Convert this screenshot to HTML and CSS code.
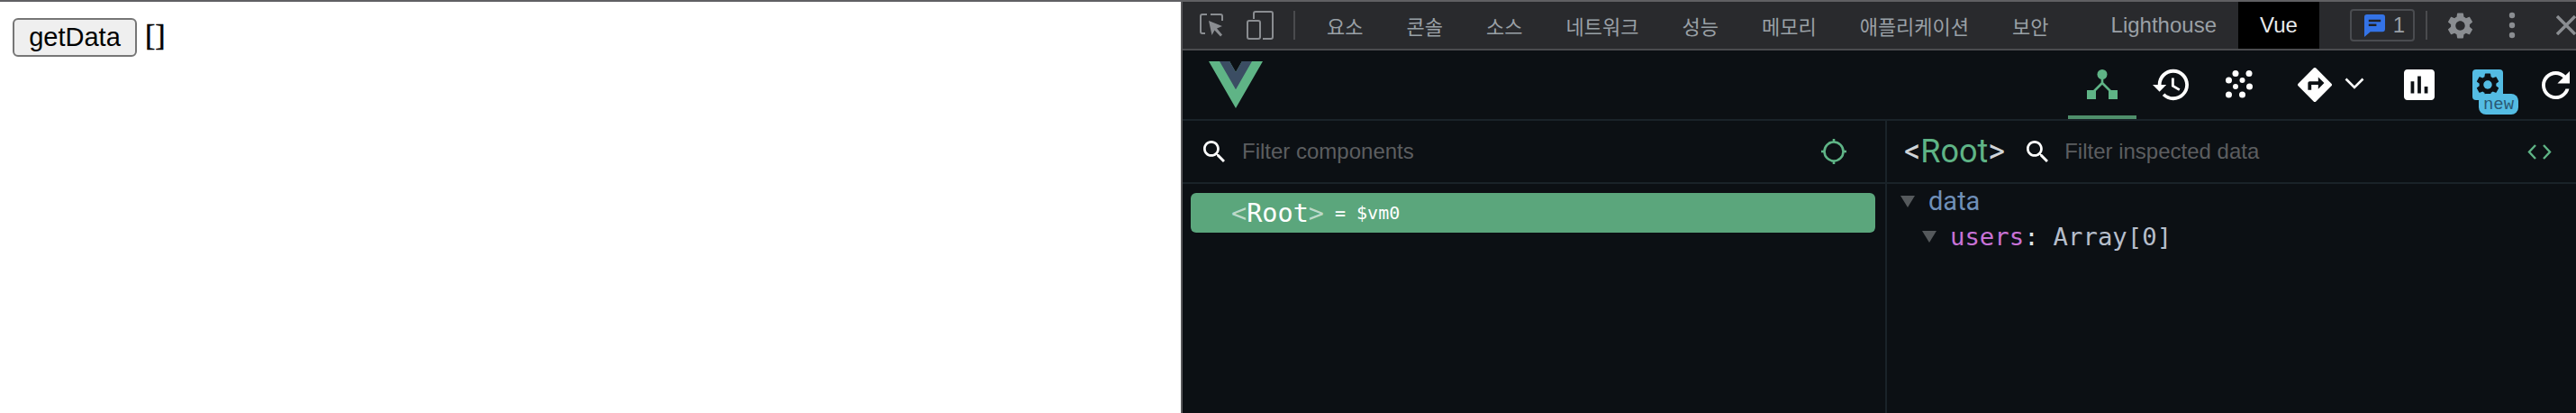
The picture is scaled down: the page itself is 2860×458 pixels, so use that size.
FILE: index.html
```html
<!DOCTYPE html>
<html lang="ko">
<head>
<meta charset="utf-8">
<title>getData</title>
<link rel="stylesheet" href="styles.css">
</head>
<body>
<div class="window">
  <main class="page">
    <button class="get-btn" type="button">getData</button>
    <span class="result">[]</span>
  </main>
  <section class="devtools">
    <header class="tabbar">
      <svg class="ic-inspect" viewBox="0 0 26 26" width="26" height="26"><path d="M8 1H3a2 2 0 0 0-2 2v17a2 2 0 0 0 2 2h3M12 1h11a2 2 0 0 1 2 2v5" fill="none" stroke="#8a8d91" stroke-width="2"/><path d="M10 8l15 6-6 2.500 6 7-2 2-6.500-7-3 5.500z" fill="#8a8d91"/></svg>
      <svg class="ic-device" viewBox="0 0 30 32" width="30" height="32"><path d="M8 9V3a2 2 0 0 1 2-2h17a2 2 0 0 1 2 2v26a2 2 0 0 1-2 2h-9" fill="none" stroke="#8a8d91" stroke-width="2"/><rect x="1" y="11" width="14" height="20" rx="2" fill="none" stroke="#8a8d91" stroke-width="2"/></svg>
      <span class="vsep"></span>
      <nav class="tabs">
        <span class="tab ko">요소</span>
        <span class="tab ko">콘솔</span>
        <span class="tab ko">소스</span>
        <span class="tab ko">네트워크</span>
        <span class="tab ko">성능</span>
        <span class="tab ko">메모리</span>
        <span class="tab ko">애플리케이션</span>
        <span class="tab ko">보안</span>
        <span class="tab light">Lighthouse</span>
        <span class="tab active">Vue</span>
      </nav>
      <span class="issues">
        <svg viewBox="0 0 24 26" width="23" height="25"><path d="M3 0h18a3 3 0 0 1 3 3v14a3 3 0 0 1-3 3H7l-7 6V3a3 3 0 0 1 3-3z" fill="#3473e6"/><path d="M5 6h14v2.500H5zM5 11h9v2.500H5z" fill="#202124"/></svg>
        <span>1</span>
      </span>
      <span class="vsep vsep-right"></span>
      <svg class="ic-gear" viewBox="2 2 20 20" width="29" height="29"><path fill="#8a8d91" d="M19.140 12.940c.04-.3.06-.61.06-.94 0-.32-.02-.64-.07-.94l2.030-1.580c.18-.14.23-.41.12-.61l-1.920-3.320c-.12-.22-.37-.29-.59-.22l-2.390.96c-.5-.38-1.030-.7-1.620-.94l-.36-2.540c-.04-.24-.24-.41-.48-.41h-3.840c-.24 0-.43.17-.47.41l-.36 2.540c-.59.24-1.130.57-1.620.94l-2.390-.96c-.22-.08-.47 0-.59.22L2.740 8.870c-.12.21-.08.47.12.61l2.030 1.580c-.05.3-.09.63-.09.94s.02.64.07.94l-2.030 1.580c-.18.14-.23.41-.12.61l1.920 3.320c.12.22.37.29.59.22l2.390-.96c.5.38 1.030.7 1.620.94l.36 2.540c.05.24.24.41.48.41h3.840c.24 0 .44-.17.47-.41l.36-2.540c.59-.24 1.130-.56 1.620-.94l2.390.96c.22.08.47 0 .59-.22l1.920-3.320c.12-.22.07-.47-.12-.61l-2.010-1.580zM12 15.600c-1.980 0-3.600-1.620-3.600-3.600s1.620-3.600 3.600-3.600 3.600 1.620 3.600 3.600-1.620 3.600-3.600 3.600z"/></svg>
      <svg class="ic-more" viewBox="0 0 8 30" width="8" height="30"><circle cx="4" cy="4" r="3.200" fill="#8a8d91"/><circle cx="4" cy="15" r="3.200" fill="#8a8d91"/><circle cx="4" cy="26" r="3.200" fill="#8a8d91"/></svg>
      <svg class="ic-close" viewBox="0 0 22 22" width="22" height="22"><path d="M1 1l20 20M21 1L1 21" stroke="#8a8d91" stroke-width="3.400" fill="none"/></svg>
    </header>

    <div class="vuebar">
      <svg class="vue-logo" viewBox="0 0 261.760 226.690" width="60" height="52"><path d="M161.096.001l-30.225 52.351L100.647.001H-.005l130.877 226.688L261.749.001z" fill="#5fb486"/><path d="M161.096.001l-30.225 52.351L100.647.001H52.346l78.526 136.010L209.398.001z" fill="#3b4d63"/></svg>
      <div class="actions">
        <span class="act act-on">
          <svg viewBox="0 0 34 34" width="34" height="34"><circle cx="17" cy="5.500" r="5.500" fill="#5fb486"/><path d="M17 8v8M17 15L6 26M17 15l11 11" stroke="#5fb486" stroke-width="2.600" fill="none"/><rect x="0" y="23" width="10" height="10" fill="#5fb486"/><rect x="24" y="23" width="10" height="10" fill="#5fb486"/></svg>
        </span>
        <span class="act">
          <svg viewBox="1 3 21 18" width="40" height="36"><path fill="#fff" d="M13 3c-4.970 0-9 4.030-9 9H1l3.890 3.890.07.14L9 12H6c0-3.870 3.130-7 7-7s7 3.130 7 7-3.130 7-7 7c-1.930 0-3.680-.79-4.940-2.060l-1.420 1.420C8.270 19.990 10.510 21 13 21c4.970 0 9-4.030 9-9s-4.030-9-9-9zm-1 5v5l4.280 2.540.72-1.210-3.500-2.080V8H12z"/></svg>
        </span>
        <span class="act">
          <svg viewBox="0 0 30 32" width="30" height="32" fill="#fff"><circle cx="11" cy="3.500" r="3.500"/><circle cx="26" cy="3.500" r="3.500"/><circle cx="3.500" cy="11" r="3.500"/><circle cx="18.500" cy="11" r="3"/><circle cx="11" cy="18" r="3"/><circle cx="26.500" cy="18" r="3.500"/><circle cx="3.500" cy="27" r="3.500"/><circle cx="18.500" cy="27" r="3.500"/></svg>
        </span>
        <span class="act act-routes">
          <svg viewBox="2 2 20 20" width="38" height="38"><path fill="#fff" d="M21.710 11.290l-9-9c-.39-.39-1.020-.39-1.410 0l-9 9c-.39.39-.39 1.020 0 1.410l9 9c.39.39 1.020.39 1.410 0l9-9c.39-.38.39-1.010 0-1.410zM14 14.500V12h-4v3H8v-4c0-.55.45-1 1-1h5V7.500l3.500 3.500-3.500 3.500z"/></svg>
          <svg class="chev" viewBox="0 0 22 13" width="22" height="13"><path d="M1.500 1.500L11 11l9.500-9.500" stroke="#fff" stroke-width="2.600" fill="none"/></svg>
        </span>
        <span class="act">
          <svg viewBox="3 3 18 18" width="34" height="34"><path fill="#fff" d="M19 3H5c-1.100 0-2 .9-2 2v14c0 1.100.9 2 2 2h14c1.100 0 2-.9 2-2V5c0-1.100-.9-2-2-2zM9 17H7v-7h2v7zm4 0h-2V7h2v10zm4 0h-2v-4h2v4z"/></svg>
        </span>
        <span class="act act-settings">
          <span class="gear-box">
            <svg viewBox="2 2 20 20" width="26" height="26"><path fill="#0c1014" d="M19.140 12.940c.04-.3.06-.61.06-.94 0-.32-.02-.64-.07-.94l2.030-1.580c.18-.14.23-.41.12-.61l-1.920-3.320c-.12-.22-.37-.29-.59-.22l-2.390.96c-.5-.38-1.030-.7-1.620-.94l-.36-2.540c-.04-.24-.24-.41-.48-.41h-3.840c-.24 0-.43.17-.47.41l-.36 2.540c-.59.24-1.130.57-1.620.94l-2.390-.96c-.22-.08-.47 0-.59.22L2.740 8.870c-.12.21-.08.47.12.61l2.030 1.580c-.05.3-.09.63-.09.94s.02.64.07.94l-2.030 1.580c-.18.14-.23.41-.12.61l1.920 3.320c.12.22.37.29.59.22l2.390-.96c.5.38 1.030.7 1.620.94l.36 2.540c.05.24.24.41.48.41h3.840c.24 0 .44-.17.47-.41l.36-2.540c.59-.24 1.130-.56 1.620-.94l2.390.96c.22.08.47 0 .59-.22l1.920-3.320c.12-.22.07-.47-.12-.61l-2.010-1.580zM12 15.600c-1.980 0-3.600-1.620-3.600-3.600s1.620-3.600 3.600-3.600 3.600 1.620 3.600 3.600-1.620 3.600-3.600 3.600z"/></svg>
          </span>
          <span class="new-badge">new</span>
        </span>
        <span class="act act-reload">
          <svg viewBox="4 4 16 16" width="31" height="31"><path fill="#fff" d="M17.650 6.350C16.200 4.900 14.210 4 12 4c-4.420 0-7.990 3.580-7.990 8s3.570 8 7.990 8c3.730 0 6.840-2.550 7.730-6h-2.080c-.82 2.330-3.040 4-5.650 4-3.310 0-6-2.690-6-6s2.690-6 6-6c1.660 0 3.140.69 4.220 1.780L13 11h7V4l-2.350 2.350z"/></svg>
        </span>
      </div>
    </div>

    <div class="panes">
      <div class="pane pane-left">
        <div class="filter">
          <svg class="search" viewBox="3 3 17.500 17.500" width="24" height="24"><path fill="#fff" d="M15.500 14h-.79l-.28-.27C15.410 12.590 16 11.110 16 9.500 16 5.910 13.090 3 9.500 3S3 5.910 3 9.500 5.910 16 9.500 16c1.610 0 3.090-.59 4.230-1.570l.27.28v.79l5 4.990L20.490 19l-4.990-5zm-6 0C7.010 14 5 11.990 5 9.500S7.010 5 9.500 5 14 7.010 14 9.500 11.990 14 9.500 14z"/></svg>
          <span class="placeholder">Filter components</span>
          <svg class="target" viewBox="0 0 28 28" width="28" height="28"><circle cx="14" cy="14" r="10.500" fill="none" stroke="#5fb486" stroke-width="2.600"/><path d="M14 0v4M14 24v4M0 14h4M24 14h4" stroke="#5fb486" stroke-width="2.600"/></svg>
        </div>
        <div class="tree-row">
          <span class="tag"><i>&lt;</i>Root<i>&gt;</i></span>
          <span class="vm">= $vm0</span>
        </div>
      </div>
      <div class="pane pane-right">
        <div class="filter filter-right">
          <span class="root-title"><i>&lt;</i>Root<i>&gt;</i></span>
          <svg class="search" viewBox="3 3 17.500 17.500" width="24" height="24"><path fill="#fff" d="M15.500 14h-.79l-.28-.27C15.410 12.590 16 11.110 16 9.500 16 5.910 13.090 3 9.500 3S3 5.910 3 9.500 5.910 16 9.500 16c1.610 0 3.090-.59 4.230-1.570l.27.28v.79l5 4.990L20.490 19l-4.990-5zm-6 0C7.010 14 5 11.990 5 9.500S7.010 5 9.500 5 14 7.010 14 9.500 11.990 14 9.500 14z"/></svg>
          <span class="placeholder">Filter inspected data</span>
          <svg class="code" viewBox="0 0 27 17" width="27" height="17"><path d="M9 1L2 8.500 9 16M18 1l7 7.500L18 16" stroke="#5fb486" stroke-width="2.400" fill="none"/></svg>
        </div>
        <div class="data">
          <div class="data-head"><span class="tri"></span><span>data</span></div>
          <div class="data-row"><span class="tri"></span><span class="key">users</span><span class="colon">:</span><span class="val">Array[0]</span></div>
        </div>
      </div>
    </div>
  </section>
</div>
</body>
</html>
```

FILE: styles.css
```css
* { box-sizing: border-box; }
html, body { margin: 0; height: 458px; overflow: hidden; background: #fff; }
.window {
  display: flex;
  width: 2860px;
  height: 458px;
  border-top: 2px solid #606063;
}
.page {
  width: 1311px;
  flex: none;
  display: flex;
  align-items: flex-start;
  padding: 18px 0 0 14px;
  font-family: "Liberation Sans", Arial, sans-serif;
  color: #000;
}
.get-btn {
  width: 138px;
  height: 43px;
  padding: 0;
  background: #efefef;
  border: 2px solid #767676;
  border-radius: 6px;
  font: 29px "Liberation Sans", Arial, sans-serif;
  color: #000;
}
.result { margin-left: 9px; font: 34px/38px "Liberation Serif", serif; -webkit-text-stroke: 0.5px #000; }

.devtools {
  flex: 1;
  min-width: 0;
  display: flex;
  flex-direction: column;
  border-left: 2px solid #58585a;
  background: #0c1014;
  overflow: hidden;
}

.tabbar {
  flex: none;
  height: 54px;
  display: flex;
  align-items: center;
  background: #292a2d;
  border-bottom: 2px solid #4a4b4e;
}
.ic-inspect { margin-left: 19px; flex: none; }
.ic-device { margin-left: 26px; flex: none; }
.vsep { flex: none; width: 2px; height: 32px; margin-left: 22px; background: #4a4b4e; }
.tabs { display: flex; align-self: stretch; margin-left: 11px; }
.tab {
  display: flex;
  align-items: center;
  padding: 0 24px;
  color: #9aa0a6;
  font: 24px "Liberation Sans", Arial, sans-serif;
  white-space: nowrap;
}
.tab.ko { font: 22px "Noto Sans CJK KR", "Liberation Sans", sans-serif; }
.tab.light { margin-left: 21px; }
.tab.active { background: #000; color: #e8eaed; }
.issues {
  flex: none;
  display: flex;
  align-items: center;
  gap: 9px;
  width: 72px;
  height: 36px;
  margin-left: 34px;
  padding-left: 14px;
  border: 2px solid #4a4c50;
  border-radius: 4px;
  color: #9aa0a6;
  font: 24px "Liberation Sans", Arial, sans-serif;
}
.vsep-right { margin-left: 12px; height: 32px; }
.ic-gear { margin-left: 22px; flex: none; }
.ic-more { margin-left: 39px; flex: none; }
.ic-close { margin-left: 45px; flex: none; }

.vuebar {
  flex: none;
  height: 78px;
  display: flex;
  align-items: flex-start;
  border-bottom: 2px solid #1a2329;
}
.vue-logo { margin: 12px 0 0 29px; flex: none; }
.actions { margin-left: auto; display: flex; height: 76px; }
.act {
  flex: none;
  width: 76px;
  display: flex;
  align-items: center;
  justify-content: center;
}
.act-on { border-bottom: 4px solid #4f8f6b; padding-top: 4px; }
.act-routes { width: 124px; justify-content: flex-start; padding-left: 27px; gap: 14px; }
.chev { margin-top: -4px; }
.act-settings { position: relative; align-items: flex-start; justify-content: flex-start; padding: 21px 0 0 21px; }
.gear-box {
  width: 34px;
  height: 34px;
  display: flex;
  align-items: center;
  justify-content: center;
  background: #54bce3;
  border-radius: 4px;
}
.new-badge {
  position: absolute;
  left: 28px;
  top: 48px;
  width: 44px;
  height: 23px;
  background: #54bce3;
  border-radius: 8px;
  color: #2a5874;
  font: 19px/25px "Liberation Mono", monospace;
  text-align: center;
}
.act-reload { width: 60px; justify-content: flex-start; padding-left: 22px; }

.panes { flex: 1; display: flex; min-height: 0; }
.pane-left { flex: none; width: 782px; border-right: 2px solid #1a2329; }
.pane-right { flex: 1; min-width: 0; }
.filter {
  height: 70px;
  display: flex;
  align-items: center;
  padding-left: 23px;
  border-bottom: 2px solid #1a2329;
}
.search { flex: none; }
.placeholder {
  margin-left: 19px;
  color: #5c5e60;
  font: 24px "Liberation Sans", sans-serif;
  white-space: nowrap;
}
.target { margin-left: auto; margin-right: 43px; flex: none; }
.tree-row {
  display: flex;
  align-items: center;
  height: 44px;
  margin: 10px 11px 0 9px;
  padding-left: 45px;
  background: #5ba67c;
  border-radius: 6px;
  color: #fff;
  font-family: "DejaVu Sans Mono", monospace;
}
.tag { font-size: 28.500px; }
.tag i { font-style: normal; color: #bcd9c9; }
.vm { margin-left: 12px; font-size: 20px; }

.filter-right { padding-left: 19px; }
.root-title { color: #5fb486; font: 36px Roboto, sans-serif; margin-right: 24px; }
.root-title i { font-style: normal; color: #d0d4d8; }
.filter-right .placeholder { margin-left: 18px; }
.code { margin-left: auto; margin-right: 27px; flex: none; }
.data { padding: 0 0 0 15px; }
.data-head {
  display: flex;
  align-items: center;
  height: 38px;
  color: #6f8fb8;
  font: 29px Roboto, sans-serif;
}
.data-row {
  display: flex;
  align-items: center;
  height: 40px;
  padding-left: 24px;
  font: 27.300px "DejaVu Sans Mono", monospace;
}
.tri {
  flex: none;
  width: 0;
  height: 0;
  margin-right: 15px;
  border-left: 8px solid transparent;
  border-right: 8px solid transparent;
  border-top: 13px solid #55595c;
}
.key { color: #c872d6; }
.colon { color: #dfe3e6; margin-right: 16px; }
.val { color: #b6becb; }
```
